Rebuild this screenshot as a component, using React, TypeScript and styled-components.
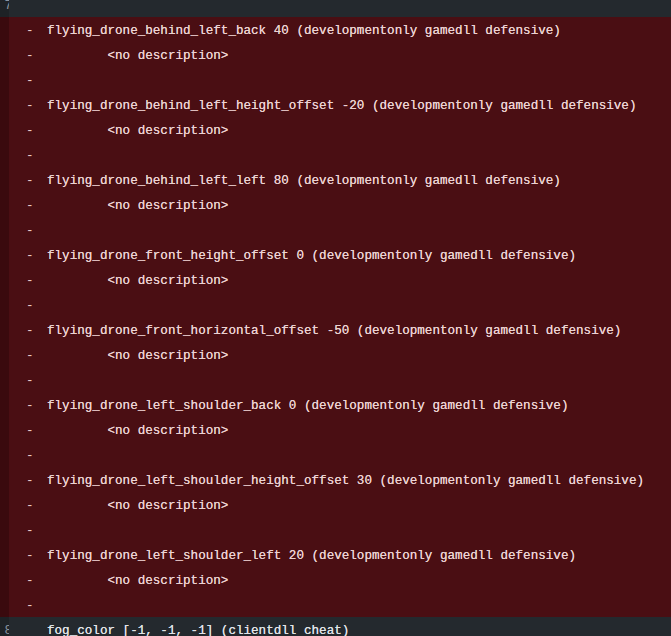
import React from "react";
import styled, { createGlobalStyle } from "styled-components";

const Global = createGlobalStyle`
  html, body { margin: 0; padding: 0; background: #24292e; }
  body { font-family: "Liberation Mono", "DejaVu Sans Mono", monospace; }
`;

const Viewer = styled.div`
  width: 671px;
  height: 636px;
  overflow: hidden;
  display: flex;
  flex-direction: column;
  background: #24292e;
`;

const Line = styled.div<{ $removed?: boolean; $h?: number }>`
  display: flex;
  flex: 0 0 auto;
  height: ${(p) => p.$h ?? 25}px;
  box-sizing: border-box;
  background: ${(p) => (p.$removed ? "#4a0e13" : "#24292e")};
  overflow: hidden;
`;

const Gutter = styled.div<{ $removed?: boolean }>`
  flex: 0 0 9px;
  width: 9px;
  overflow: hidden;
  display: flex;
  justify-content: flex-end;
  background: ${(p) => (p.$removed ? "#3a0a0e" : "#1e2226")};
  color: #8b949e;
  font-size: 12.6px;
  line-height: 22px;
  padding-top: 3px;
  white-space: pre;
`;

const GutterNum = styled.span`
  margin-right: -3px;
`;

const Marker = styled.div`
  flex: 0 0 auto;
  width: 21px;
  padding-left: 17px;
  padding-top: 3px;
  box-sizing: content-box;
  color: #e8c9c9;
  font-size: 12.6px;
  line-height: 22px;
  white-space: pre;
`;

const Code = styled.div<{ $removed?: boolean }>`
  flex: 1 1 auto;
  color: ${(p) => (p.$removed ? "#ecd2d2" : "#e1e4e8")};
  font-size: 12.6px;
  line-height: 22px;
  padding-top: 3px;
  white-space: pre;
  text-shadow: 0 0 0.3px currentColor;
`;

const TopLine = styled(Line)`
  align-items: flex-end;
`;

const items: [string, string][] = [
  ["flying_drone_behind_left_back", "40"],
  ["flying_drone_behind_left_height_offset", "-20"],
  ["flying_drone_behind_left_left", "80"],
  ["flying_drone_front_height_offset", "0"],
  ["flying_drone_front_horizontal_offset", "-50"],
  ["flying_drone_left_shoulder_back", "0"],
  ["flying_drone_left_shoulder_height_offset", "30"],
  ["flying_drone_left_shoulder_left", "20"],
];

export default function App() {
  const lines: string[] = [];
  items.forEach(([name, val]) => {
    lines.push(`${name} ${val} (developmentonly gamedll defensive)`);
    lines.push(`        <no description>`);
    lines.push(``);
  });
  return (
    <>
      <Global />
      <Viewer>
        <TopLine $h={17}>
          <Gutter>
            <GutterNum>7</GutterNum>
          </Gutter>
          <Code />
        </TopLine>
        {lines.map((t, i) => (
          <Line key={i} $removed>
            <Gutter $removed />
            <Marker>-</Marker>
            <Code $removed>{t}</Code>
          </Line>
        ))}
        <Line>
          <Gutter>
            <GutterNum>8</GutterNum>
          </Gutter>
          <Marker> </Marker>
          <Code>fog_color [-1, -1, -1] (clientdll cheat)</Code>
        </Line>
      </Viewer>
    </>
  );
}
